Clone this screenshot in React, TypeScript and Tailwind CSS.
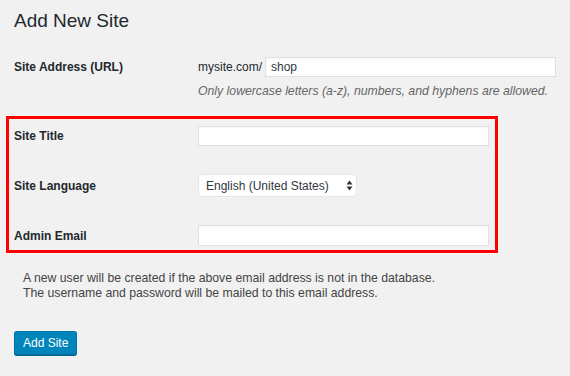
export default function App() {
  return (
    <div className="w-[570px] h-[376px] overflow-hidden bg-[#f1f1f1] pl-[6px] pt-[9px] text-[12px] text-[#444] font-['Liberation_Sans',Arial,sans-serif]">
      <h1 className="pl-[8px] text-[19px] leading-[24px] text-[#23282d]">Add New Site</h1>

      {/* Site address */}
      <div className="mt-[24px] flex h-[20px] items-center">
        <label className="w-[192px] pl-[8px] font-bold text-[#23282d]">Site Address (URL)</label>
        <span className="text-[#23282d]">mysite.com/</span>
        <input
          defaultValue="shop"
          className="ml-[3px] h-[20px] w-[291px] border border-[#e0e0e0] bg-white px-[5px] text-[12px] text-[#32373c] shadow-[inset_0_1px_2px_rgba(0,0,0,0.04)] outline-none"
        />
      </div>
      <p className="mt-[6px] pl-[192px] text-[12.25px] leading-[16px] italic text-[#666]">
        Only lowercase letters (a-z), numbers, and hyphens are allowed.
      </p>

      {/* Highlighted fields */}
      <div className="mt-[17px] w-[492px] border-[3px] border-[#ff0000] pl-[5px] pt-[7px] pb-[4px] shadow-[0_0_0_1px_#fafafa]">
        <div className="flex h-[20px] items-center">
          <label className="w-[184px] font-bold text-[#23282d]">Site Title</label>
          <input className="h-[20px] w-[291px] border border-[#e0e0e0] bg-white px-[5px] shadow-[inset_0_1px_2px_rgba(0,0,0,0.04)] outline-none" />
        </div>
        <div className="mt-[28px] flex h-[23px] items-center">
          <label className="w-[184px] font-bold text-[#23282d]">Site Language</label>
          <div className="relative h-[23px] w-[159px]">
            <select className="h-[23px] w-full appearance-none rounded-[4px] border border-[#e6e6e6] bg-white pl-[7px] text-[12px] text-[#32373c] outline-none">
              <option>English (United States)</option>
            </select>
            <svg
              className="pointer-events-none absolute right-[4px] top-[6px]"
              width="7"
              height="11"
              viewBox="0 0 7 11"
            >
              <path d="M3.5 0.5 L6.5 4.5 L0.5 4.5 Z" fill="#333" />
              <path d="M3.5 10.5 L6.5 6.5 L0.5 6.5 Z" fill="#333" />
            </svg>
          </div>
        </div>
        <div className="mt-[28px] flex h-[21px] items-center">
          <label className="w-[184px] font-bold text-[#23282d]">Admin Email</label>
          <input className="h-[21px] w-[291px] border border-[#e0e0e0] bg-white px-[5px] shadow-[inset_0_1px_2px_rgba(0,0,0,0.04)] outline-none" />
        </div>
      </div>

      <p className="mt-[18px] pl-[17px] text-[12.25px] leading-[15px] text-[#444]">
        A new user will be created if the above email address is not in the database.
        <br />
        The username and password will be mailed to this email address.
      </p>

      <button className="mt-[30px] ml-[8px] h-[24px] rounded-[3px] border border-[#0073aa] border-b-[#006799] bg-[#0085ba] px-[8px] text-[12px] text-white shadow-[0_1px_0_#006799]">
        Add Site
      </button>
    </div>
  );
}
